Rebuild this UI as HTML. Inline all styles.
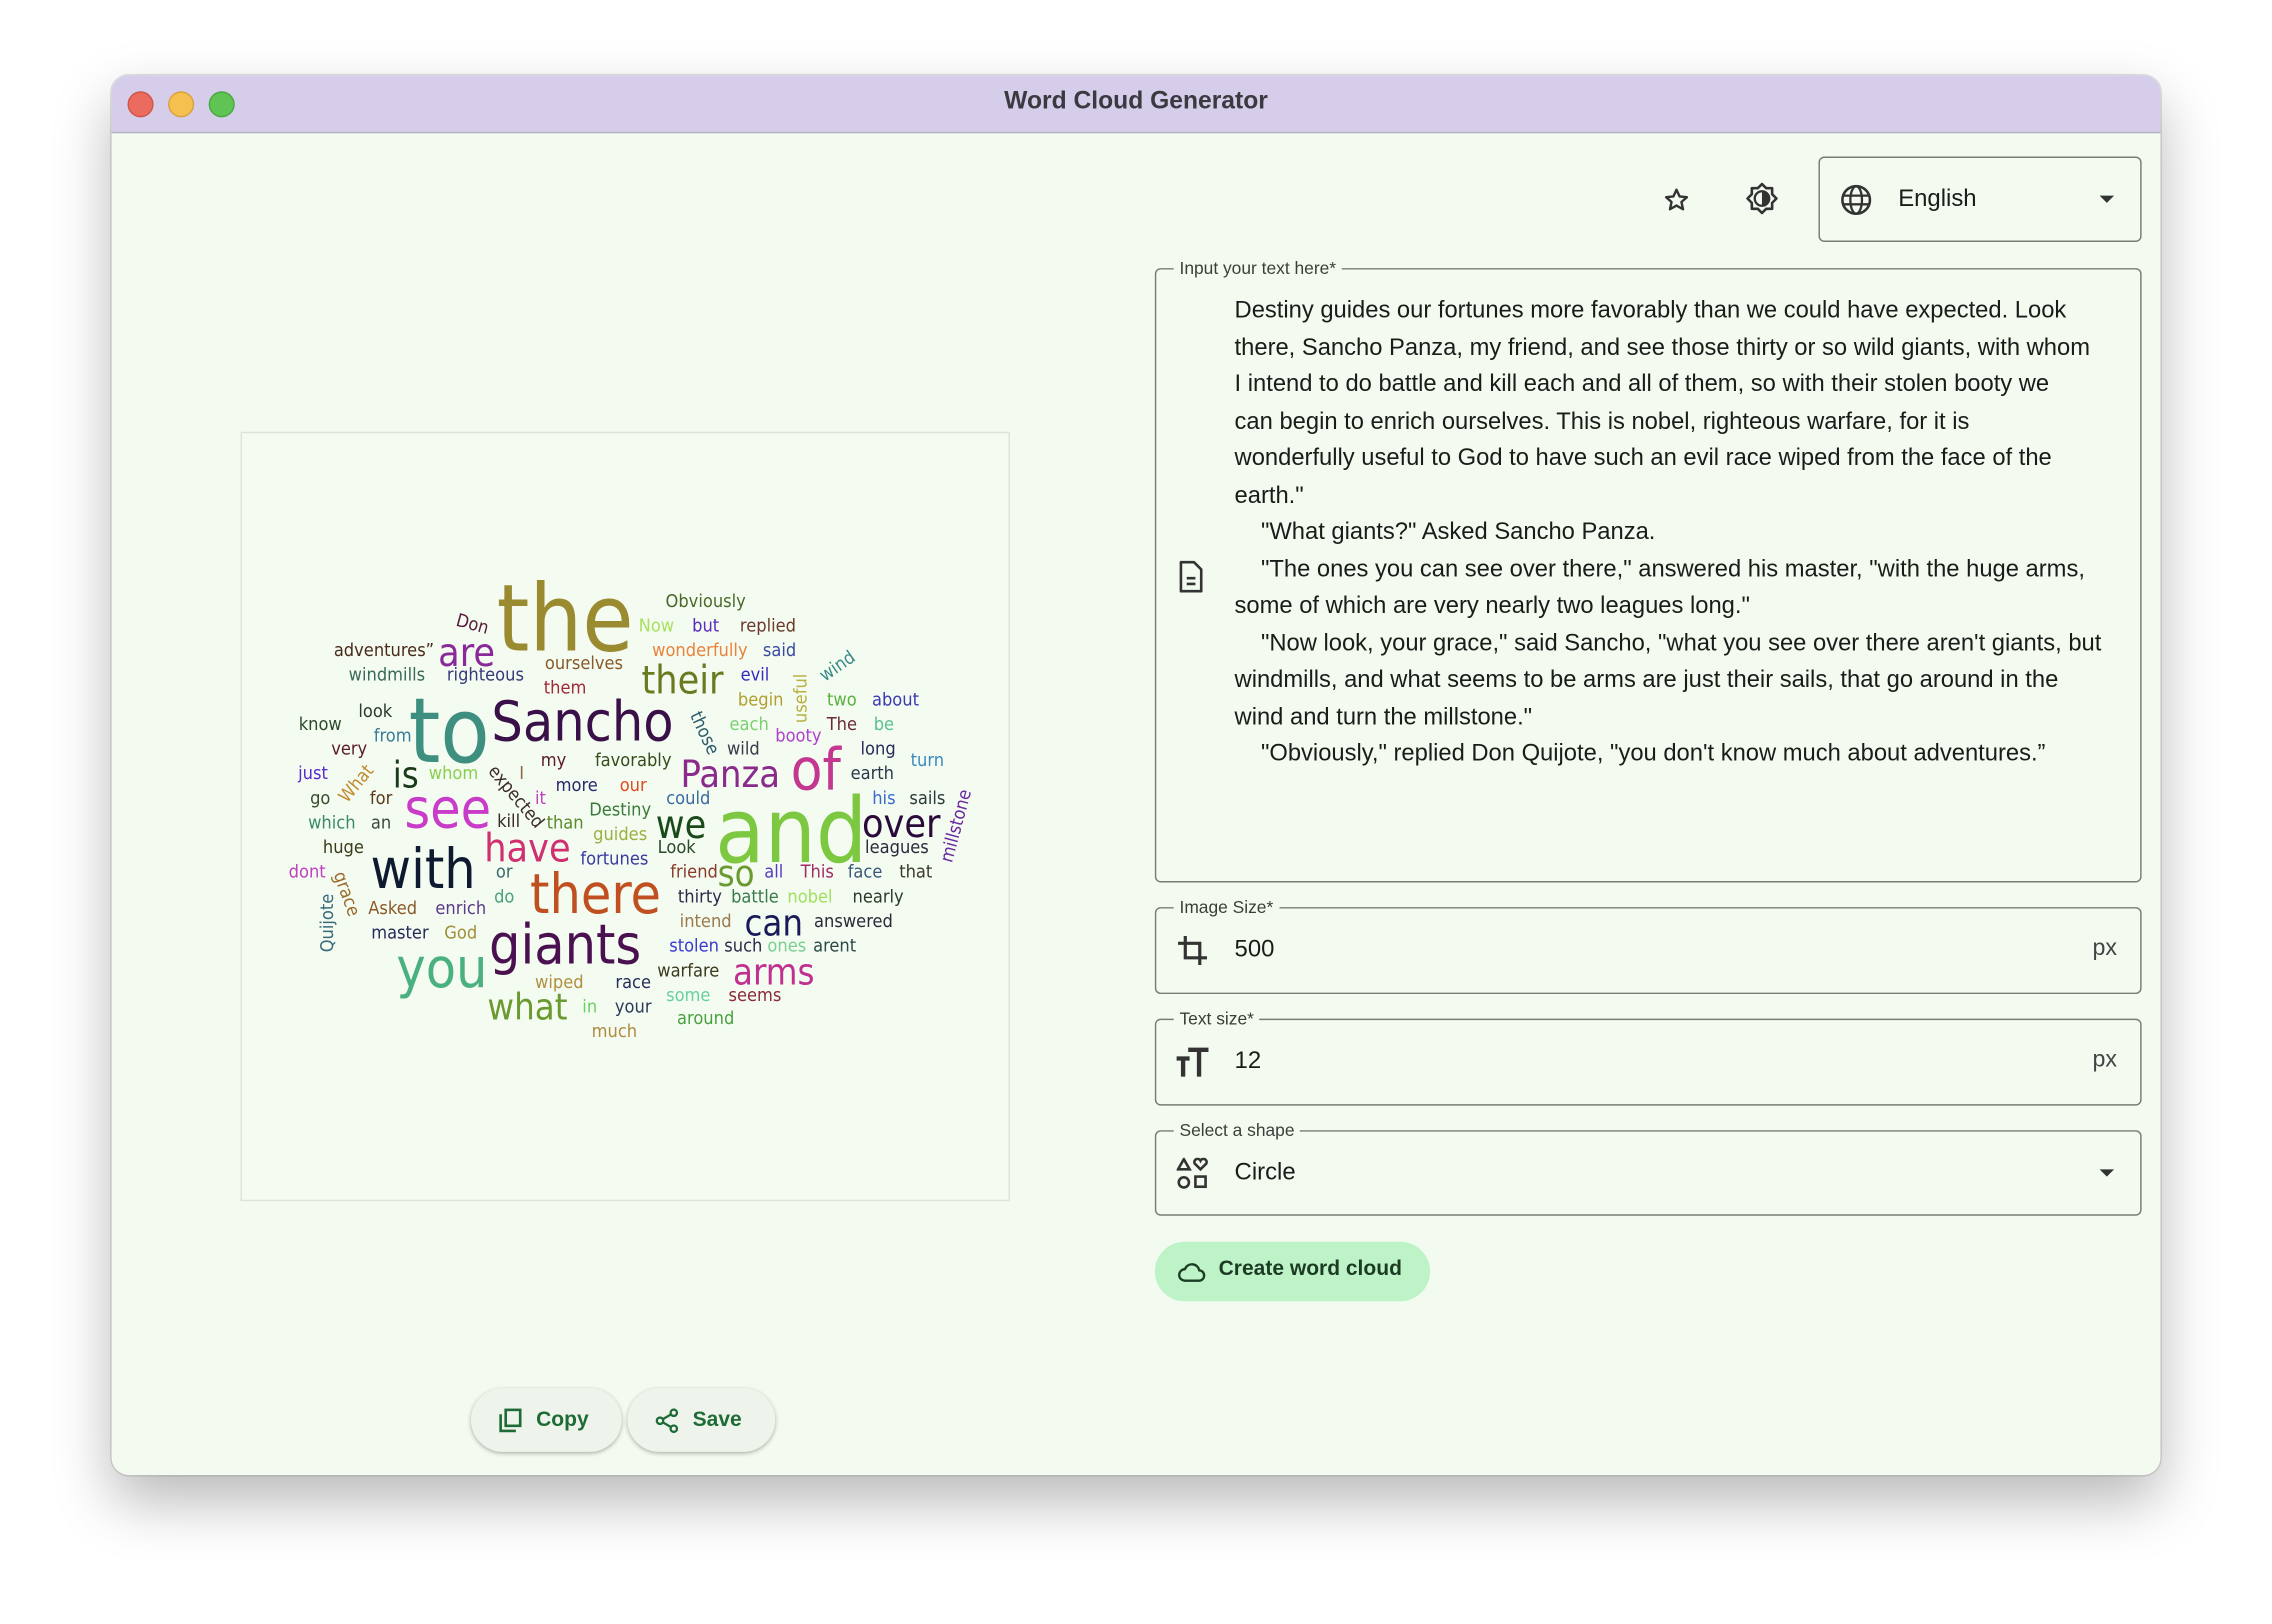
<!DOCTYPE html>
<html><head><meta charset="utf-8">
<style>
html,body{margin:0;padding:0;background:#fff;width:2272px;height:1624px;overflow:hidden}
#s{position:absolute;left:0;top:0;width:1568px;height:1121px;transform:scale(1.449);transform-origin:0 0;font-family:"Liberation Sans",sans-serif}
.win{position:absolute;left:77px;top:52px;width:1414px;height:966px;border-radius:12px;background:#f3fbf0;overflow:hidden;box-shadow:0 18px 40px rgba(0,0,0,.28),0 0 0 1px rgba(0,0,0,.12)}
.tb{position:absolute;left:0;top:0;width:100%;height:39px;background:#d5cdea;border-bottom:1px solid #b9b4c4}
.tb .t{position:absolute;left:0;right:0;top:8px;text-align:center;font-size:17px;font-weight:bold;color:#3b3a40}
.dot{position:absolute;top:11px;width:16px;height:16px;border-radius:50%}
.fs{position:absolute;border:1px solid #777c76;border-radius:4px}
.lab{position:absolute;font-size:12px;color:#3a3f3a;background:#f3fbf0;padding:0 4px;top:-9px;left:12px;line-height:16px}
.txt{position:absolute;left:54px;top:16px;font-size:16.4px;line-height:25.5px;color:#1a1c1a;white-space:nowrap}
.val{position:absolute;left:54px;font-size:16.5px;color:#1a1c1a;top:19px}
.px{position:absolute;right:16px;top:19px;font-size:16px;color:#444}
.wc{position:absolute;left:0;top:0}
.w{position:absolute;transform:translate(-50%,-50%);font-family:"DejaVu Sans Condensed","DejaVu Sans",sans-serif;font-size:12.5px;line-height:1;white-space:nowrap}
.btn{position:absolute;border-radius:23px;background:#eef4ec;box-shadow:0 1px 3px rgba(0,0,0,.3);color:#1d6b35;font-weight:bold;font-size:14.5px}
</style></head><body><div id="s">
<div class="win">
 <div class="tb"><div class="dot" style="left:11px;background:#ec6b5f;border:.5px solid #d0554a"></div><div class="dot" style="left:39px;background:#f5c04f;border:.5px solid #d9a23c"></div><div class="dot" style="left:67px;background:#5fc454;border:.5px solid #4aa841"></div><div class="t">Word Cloud Generator</div></div>
</div>
<!-- top icons -->
<svg style="position:absolute;left:1147px;top:128px" width="20" height="20" viewBox="0 0 24 24"><path d="M12 3.5l2.6 5.6 6 .6-4.5 4 1.3 6L12 16.6 6.6 19.7l1.3-6-4.5-4 6-.6z" fill="none" stroke="#333" stroke-width="2" stroke-linejoin="round"/></svg>
<svg style="position:absolute;left:1204px;top:125px" width="24" height="24" viewBox="0 0 24 24"><path d="M12 2l2.9 2.9H19v4.1L22 12l-3 3v4.1h-4.1L12 22l-2.9-2.9H5V15l-3-3 3-3V4.9h4.1z" fill="none" stroke="#333" stroke-width="1.8" stroke-linejoin="round"/><path d="M12 7a5 5 0 0 1 0 10z" fill="#333"/><circle cx="12" cy="12" r="5" fill="none" stroke="#333" stroke-width="1.6"/></svg>
<div class="fs" style="left:1255px;top:108px;width:221px;height:57px">
 <svg style="position:absolute;left:13px;top:17px" width="24" height="24" viewBox="0 0 24 24"><circle cx="12" cy="12" r="9.5" fill="none" stroke="#333" stroke-width="1.8"/><ellipse cx="12" cy="12" rx="4" ry="9.5" fill="none" stroke="#333" stroke-width="1.6"/><path d="M2.5 9h19M2.5 15h19" stroke="#333" stroke-width="1.6"/></svg>
 <div style="position:absolute;left:54px;top:19px;font-size:16.5px;color:#1a1c1a">English</div>
 <div style="position:absolute;right:18px;top:26px;width:0;height:0;border-left:5px solid transparent;border-right:5px solid transparent;border-top:5px solid #333"></div>
</div>
<!-- textarea -->
<div class="fs" style="left:797px;top:185px;width:679px;height:422px">
 <div class="lab">Input your text here*</div>
 <svg style="position:absolute;left:15px;top:200px" width="18" height="24" viewBox="0 0 18 24"><path d="M2 2h9l5 5v15H2z" fill="none" stroke="#333" stroke-width="1.8" stroke-linejoin="round"/><path d="M6 13h6M6 17h6" stroke="#333" stroke-width="1.8"/></svg>
 <div class="txt">Destiny guides our fortunes more favorably than we could have expected. Look<br>there, Sancho Panza, my friend, and see those thirty or so wild giants, with whom<br>I intend to do battle and kill each and all of them, so with their stolen booty we<br>can begin to enrich ourselves. This is nobel, righteous warfare, for it is<br>wonderfully useful to God to have such an evil race wiped from the face of the<br>earth."<br>&nbsp;&nbsp;&nbsp;&nbsp;"What giants?" Asked Sancho Panza.<br>&nbsp;&nbsp;&nbsp;&nbsp;"The ones you can see over there," answered his master, "with the huge arms,<br>some of which are very nearly two leagues long."<br>&nbsp;&nbsp;&nbsp;&nbsp;"Now look, your grace," said Sancho, "what you see over there aren't giants, but<br>windmills, and what seems to be arms are just their sails, that go around in the<br>wind and turn the millstone."<br>&nbsp;&nbsp;&nbsp;&nbsp;"Obviously," replied Don Quijote, "you don't know much about adventures.”</div>
</div>
<div class="fs" style="left:797px;top:626px;width:679px;height:58px"><div class="lab">Image Size*</div>
 <svg style="position:absolute;left:13px;top:17px" width="24" height="24" viewBox="0 0 24 24"><path d="M7 2v15h15M2 7h15v15" fill="none" stroke="#333" stroke-width="2.2"/></svg>
 <div class="val">500</div><div class="px">px</div></div>
<div class="fs" style="left:797px;top:703px;width:679px;height:58px"><div class="lab">Text size*</div>
 <svg style="position:absolute;left:13px;top:18px" width="24" height="22" viewBox="0 0 24 22"><path d="M1 7h9v3H7v11H4V10H1zM9 1h14v3h-5v17h-3V4H9z" fill="#333"/></svg>
 <div class="val">12</div><div class="px">px</div></div>
<div class="fs" style="left:797px;top:780px;width:679px;height:57px"><div class="lab">Select a shape</div>
 <svg style="position:absolute;left:14px;top:18px" width="22" height="22" viewBox="0 0 22 22"><path d="M5 1l4 7H1z" fill="none" stroke="#333" stroke-width="1.8"/><path d="M16.5 8l-4-4a2 2 0 0 1 4-2 2 2 0 0 1 4 2z" fill="none" stroke="#333" stroke-width="1.8"/><circle cx="5" cy="17" r="3.5" fill="none" stroke="#333" stroke-width="1.8"/><rect x="13" y="13" width="7" height="7" fill="none" stroke="#333" stroke-width="1.8"/></svg>
 <div class="val">Circle</div>
 <div style="position:absolute;right:18px;top:26px;width:0;height:0;border-left:5px solid transparent;border-right:5px solid transparent;border-top:5px solid #333"></div></div>
<div style="position:absolute;left:797px;top:857px;width:190px;height:41px;border-radius:21px;background:#bdf3c6">
 <svg style="position:absolute;left:16px;top:12px" width="19" height="17" viewBox="0 0 24 20"><path d="M6 18h12a4.5 4.5 0 0 0 .5-9A6.5 6.5 0 0 0 6 8a5 5 0 0 0 0 10z" fill="none" stroke="#1c3b24" stroke-width="2"/></svg>
 <div style="position:absolute;left:44px;top:11px;font-size:14.5px;font-weight:bold;color:#1c3b24">Create word cloud</div></div>
<!-- image -->
<div style="position:absolute;left:166px;top:298px;width:529px;height:529px;border:1px solid #dde3dc;background:#f4fbf1"></div>
<div class="wc">
<span class="w" style="left:390px;top:428px;font-size:64px;color:#9a8a30">the</span>
<span class="w" style="left:310px;top:505px;font-size:62px;color:#3f8f80">to</span>
<span class="w" style="left:402px;top:498px;font-size:38px;color:#3a1048">Sancho</span>
<span class="w" style="left:546px;top:574px;font-size:62px;color:#7cc840">and</span>
<span class="w" style="left:563px;top:532px;font-size:40px;color:#c3378f">of</span>
<span class="w" style="left:504px;top:535px;font-size:26px;color:#8a2a8a">Panza</span>
<span class="w" style="left:309px;top:558px;font-size:38px;color:#c83cc8">see</span>
<span class="w" style="left:292px;top:600px;font-size:38px;color:#0d1a30">with</span>
<span class="w" style="left:411px;top:617px;font-size:38px;color:#c05020">there</span>
<span class="w" style="left:390px;top:652px;font-size:38px;color:#4a1050">giants</span>
<span class="w" style="left:305px;top:668px;font-size:38px;color:#4ab080">you</span>
<span class="w" style="left:364px;top:586px;font-size:27px;color:#d03070">have</span>
<span class="w" style="left:471px;top:470px;font-size:27px;color:#6a7a20">their</span>
<span class="w" style="left:322px;top:451px;font-size:27px;color:#8a2a9a">are</span>
<span class="w" style="left:622px;top:569px;font-size:27px;color:#2a0a3a">over</span>
<span class="w" style="left:470px;top:570px;font-size:27px;color:#1a4a1a">we</span>
<span class="w" style="left:534px;top:637px;font-size:25px;color:#1a1a5a">can</span>
<span class="w" style="left:534px;top:671px;font-size:25px;color:#c03090">arms</span>
<span class="w" style="left:364px;top:695px;font-size:25px;color:#6a9a30">what</span>
<span class="w" style="left:280px;top:535px;font-size:25px;color:#1a3a1a">is</span>
<span class="w" style="left:508px;top:603px;font-size:25px;color:#6a9a30">so</span>
<span class="w" style="left:487px;top:415px;color:#4a6a2a">Obviously</span>
<span class="w" style="left:326px;top:431px;color:#5a1a3a;transform:translate(-50%,-50%) rotate(15deg)">Don</span>
<span class="w" style="left:453px;top:432px;color:#a8e060">Now</span>
<span class="w" style="left:487px;top:432px;color:#5a2ac0">but</span>
<span class="w" style="left:530px;top:432px;color:#6a3a2a">replied</span>
<span class="w" style="left:265px;top:449px;color:#4a2a1a">adventures”</span>
<span class="w" style="left:483px;top:449px;color:#e8843a">wonderfully</span>
<span class="w" style="left:538px;top:449px;color:#3a4aa0">said</span>
<span class="w" style="left:267px;top:466px;color:#3a6a5a">windmills</span>
<span class="w" style="left:335px;top:466px;color:#3a3a7a">righteous</span>
<span class="w" style="left:403px;top:458px;color:#8a5a2a">ourselves</span>
<span class="w" style="left:390px;top:475px;color:#a02a3a">them</span>
<span class="w" style="left:521px;top:466px;color:#3a2ac0">evil</span>
<span class="w" style="left:553px;top:482px;color:#b8b040;transform:translate(-50%,-50%) rotate(-90deg)">useful</span>
<span class="w" style="left:578px;top:460px;color:#3a8a8a;transform:translate(-50%,-50%) rotate(-35deg)">wind</span>
<span class="w" style="left:525px;top:483px;color:#b0a030">begin</span>
<span class="w" style="left:581px;top:483px;color:#5ab040">two</span>
<span class="w" style="left:618px;top:483px;color:#3a3ab0">about</span>
<span class="w" style="left:259px;top:491px;color:#2a3a2a">look</span>
<span class="w" style="left:221px;top:500px;color:#2a4a2a">know</span>
<span class="w" style="left:271px;top:508px;color:#3a7a9a">from</span>
<span class="w" style="left:486px;top:506px;color:#2a5a6a;transform:translate(-50%,-50%) rotate(65deg)">those</span>
<span class="w" style="left:517px;top:500px;color:#7ad070">each</span>
<span class="w" style="left:551px;top:508px;color:#b040d0">booty</span>
<span class="w" style="left:581px;top:500px;color:#6a2a3a">The</span>
<span class="w" style="left:610px;top:500px;color:#5ac090">be</span>
<span class="w" style="left:241px;top:517px;color:#5a1a2a">very</span>
<span class="w" style="left:513px;top:517px;color:#3a3a4a">wild</span>
<span class="w" style="left:606px;top:517px;color:#2a2a5a">long</span>
<span class="w" style="left:382px;top:525px;color:#5a1a2a">my</span>
<span class="w" style="left:437px;top:525px;color:#3a4a1a">favorably</span>
<span class="w" style="left:640px;top:525px;color:#3a8ac0">turn</span>
<span class="w" style="left:216px;top:534px;color:#5a2ad0">just</span>
<span class="w" style="left:246px;top:541px;color:#c08a30;transform:translate(-50%,-50%) rotate(-50deg)">What</span>
<span class="w" style="left:313px;top:534px;color:#8ad050">whom</span>
<span class="w" style="left:360px;top:534px;color:#8a6a4a">I</span>
<span class="w" style="left:602px;top:534px;color:#2a3a4a">earth</span>
<span class="w" style="left:356px;top:550px;color:#3a2a2a;transform:translate(-50%,-50%) rotate(50deg)">expected</span>
<span class="w" style="left:398px;top:542px;color:#2a2a6a">more</span>
<span class="w" style="left:437px;top:542px;color:#e04a20">our</span>
<span class="w" style="left:221px;top:551px;color:#3a4a2a">go</span>
<span class="w" style="left:263px;top:551px;color:#5a3a1a">for</span>
<span class="w" style="left:373px;top:551px;color:#c040c0">it</span>
<span class="w" style="left:475px;top:551px;color:#3a6aa0">could</span>
<span class="w" style="left:610px;top:551px;color:#3a6ad0">his</span>
<span class="w" style="left:640px;top:551px;color:#2a3a3a">sails</span>
<span class="w" style="left:229px;top:568px;color:#3a8a6a">which</span>
<span class="w" style="left:263px;top:568px;color:#3a4a3a">an</span>
<span class="w" style="left:351px;top:567px;color:#3a2a2a">kill</span>
<span class="w" style="left:390px;top:568px;color:#5a8a2a">than</span>
<span class="w" style="left:428px;top:559px;color:#3a7a3a">Destiny</span>
<span class="w" style="left:660px;top:570px;color:#6a2aa0;transform:translate(-50%,-50%) rotate(-75deg)">millstone</span>
<span class="w" style="left:428px;top:576px;color:#9ab040">guides</span>
<span class="w" style="left:237px;top:585px;color:#3a3a1a">huge</span>
<span class="w" style="left:467px;top:585px;color:#2a4a2a">Look</span>
<span class="w" style="left:619px;top:585px;color:#2a2a3a">leagues</span>
<span class="w" style="left:424px;top:593px;color:#3a3aa0">fortunes</span>
<span class="w" style="left:212px;top:602px;color:#c040c0">dont</span>
<span class="w" style="left:239px;top:617px;color:#9a6a2a;transform:translate(-50%,-50%) rotate(70deg)">grace</span>
<span class="w" style="left:348px;top:602px;color:#3a6a6a">or</span>
<span class="w" style="left:479px;top:602px;color:#8a3a2a">friend</span>
<span class="w" style="left:534px;top:602px;color:#5a3ac0">all</span>
<span class="w" style="left:564px;top:602px;color:#a02a6a">This</span>
<span class="w" style="left:597px;top:602px;color:#3a5a7a">face</span>
<span class="w" style="left:632px;top:602px;color:#3a3a2a">that</span>
<span class="w" style="left:226px;top:637px;color:#3a6a7a;transform:translate(-50%,-50%) rotate(-90deg)">Quijote</span>
<span class="w" style="left:348px;top:619px;color:#4aa080">do</span>
<span class="w" style="left:483px;top:619px;color:#2a2a4a">thirty</span>
<span class="w" style="left:521px;top:619px;color:#3a7a4a">battle</span>
<span class="w" style="left:559px;top:619px;color:#a0e060">nobel</span>
<span class="w" style="left:606px;top:619px;color:#2a3a2a">nearly</span>
<span class="w" style="left:271px;top:627px;color:#8a5a2a">Asked</span>
<span class="w" style="left:318px;top:627px;color:#5a3a8a">enrich</span>
<span class="w" style="left:487px;top:636px;color:#9a7a4a">intend</span>
<span class="w" style="left:589px;top:636px;color:#2a2a3a">answered</span>
<span class="w" style="left:276px;top:644px;color:#2a2a5a">master</span>
<span class="w" style="left:318px;top:644px;color:#a0903a">God</span>
<span class="w" style="left:479px;top:653px;color:#3a3ad0">stolen</span>
<span class="w" style="left:513px;top:653px;color:#2a2a4a">such</span>
<span class="w" style="left:543px;top:653px;color:#7ad090">ones</span>
<span class="w" style="left:576px;top:653px;color:#2a4a4a">arent</span>
<span class="w" style="left:475px;top:670px;color:#3a3a1a">warfare</span>
<span class="w" style="left:386px;top:678px;color:#b09040">wiped</span>
<span class="w" style="left:437px;top:678px;color:#2a2a5a">race</span>
<span class="w" style="left:475px;top:687px;color:#6ad0a0">some</span>
<span class="w" style="left:521px;top:687px;color:#8a2a3a">seems</span>
<span class="w" style="left:407px;top:695px;color:#6ad060">in</span>
<span class="w" style="left:437px;top:695px;color:#2a3a5a">your</span>
<span class="w" style="left:424px;top:712px;color:#b08a40">much</span>
<span class="w" style="left:487px;top:703px;color:#4aa040">around</span>
</div>
<div class="btn" style="left:325px;top:958px;width:104px;height:44px">
 <svg style="position:absolute;left:19px;top:14px" width="16" height="17" viewBox="0 0 16 17"><rect x="5" y="1" width="10" height="11" fill="none" stroke="#1d6b35" stroke-width="1.8"/><path d="M1.5 4v11.5H12" fill="none" stroke="#1d6b35" stroke-width="1.8"/></svg>
 <div style="position:absolute;left:45px;top:14px">Copy</div></div>
<div class="btn" style="left:433px;top:958px;width:102px;height:44px">
 <svg style="position:absolute;left:19px;top:14px" width="17" height="17" viewBox="0 0 17 17"><circle cx="13" cy="3" r="2.2" fill="none" stroke="#1d6b35" stroke-width="1.6"/><circle cx="3.5" cy="8.5" r="2.2" fill="none" stroke="#1d6b35" stroke-width="1.6"/><circle cx="13" cy="14" r="2.2" fill="none" stroke="#1d6b35" stroke-width="1.6"/><path d="M5.5 7.4l5.6-3.3M5.5 9.6l5.6 3.3" stroke="#1d6b35" stroke-width="1.6"/></svg>
 <div style="position:absolute;left:45px;top:14px">Save</div></div>
</div></body></html>
